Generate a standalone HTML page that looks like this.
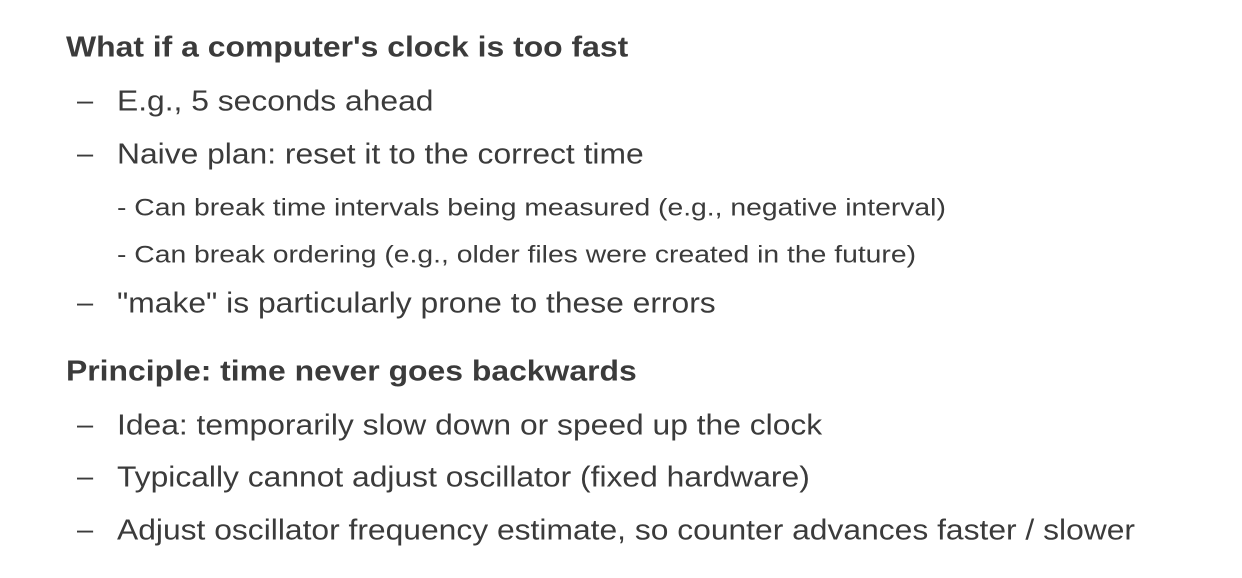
<!DOCTYPE html>
<html><head><meta charset="utf-8"><style>
body{margin:0;width:1242px;height:578px;background:#fff;position:relative;overflow:hidden;font-family:"Liberation Sans",Arial,sans-serif;color:#3b3b3b}
div{position:absolute;line-height:1;white-space:nowrap;transform-origin:0 0}
.h{left:66px;font-size:31.9px;font-weight:bold;transform:scaleY(0.909)}
.d{left:77px;font-size:29px}
.t{left:117px;font-size:31.8px;transform:scaleY(0.912)}
.s{left:117px;font-size:28.3px;transform:scaleY(0.848)}
</style></head><body>
<div class="h" style="top:33px">What if a computer's clock is too fast</div>
<div class="d" style="top:87px">–</div><div class="t" style="top:87px">E.g., 5 seconds ahead</div>
<div class="d" style="top:140px">–</div><div class="t" style="top:140px">Naive plan: reset it to the correct time</div>
<div class="s" style="top:195px">- Can break time intervals being measured (e.g., negative interval)</div>
<div class="s" style="top:242px">- Can break ordering (e.g., older files were created in the future)</div>
<div class="d" style="top:289px">–</div><div class="t" style="top:289px">"make" is particularly prone to these errors</div>
<div class="h" style="top:357px">Principle: time never goes backwards</div>
<div class="d" style="top:411px">–</div><div class="t" style="top:411px">Idea: temporarily slow down or speed up the clock</div>
<div class="d" style="top:463px">–</div><div class="t" style="top:463px">Typically cannot adjust oscillator (fixed hardware)</div>
<div class="d" style="top:516px">–</div><div class="t" style="top:516px">Adjust oscillator frequency estimate, so counter advances faster / slower</div>
</body></html>
